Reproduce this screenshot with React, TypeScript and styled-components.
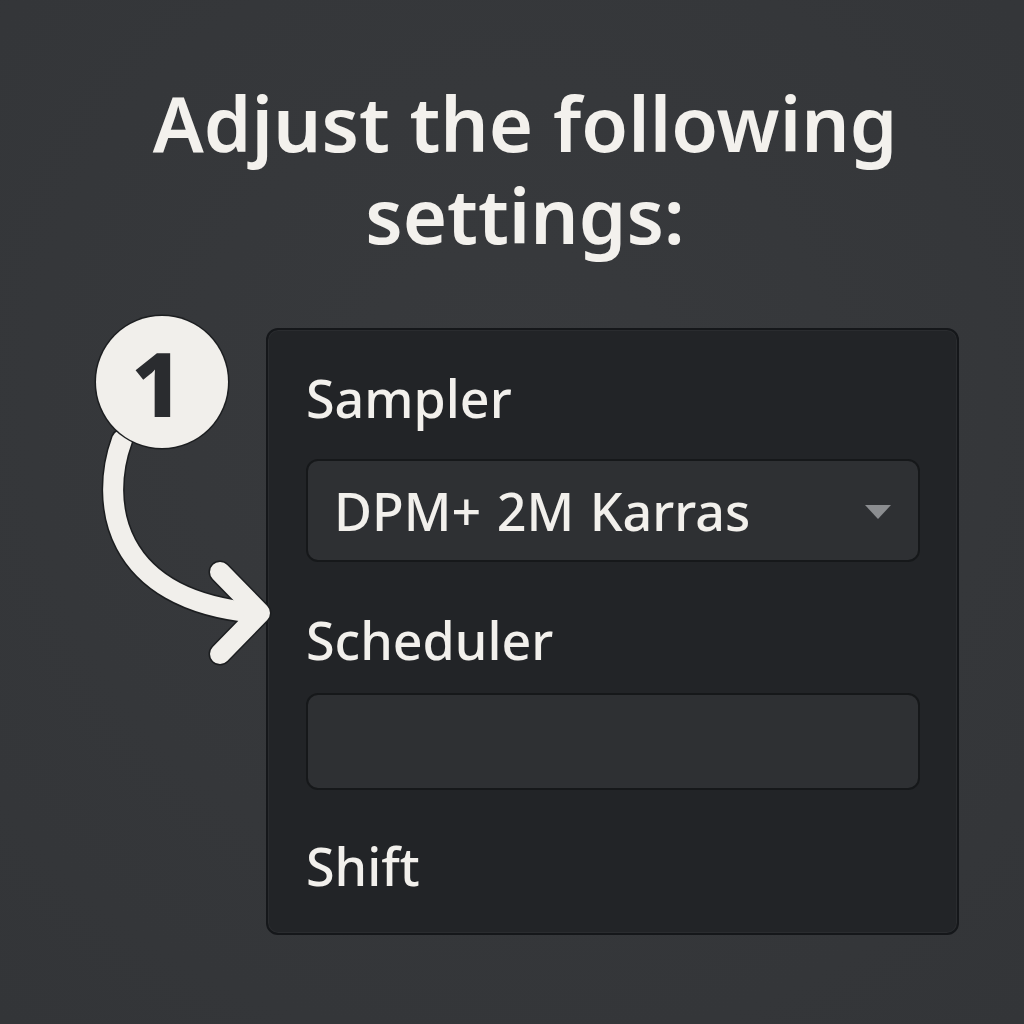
import React from "react";
import styled, { createGlobalStyle } from "styled-components";

const GlobalStyle = createGlobalStyle`
  html, body {
    margin: 0;
    padding: 0;
    background: #36383b;
  }
  body {
    font-family: "Noto Sans", "Open Sans", sans-serif;
    color: #f2f0ec;
  }
`;

const Page = styled.div`
  width: 1024px;
  height: 1024px;
  display: flex;
  flex-direction: column;
  align-items: stretch;
  background: radial-gradient(circle at 50% 40%, #383a3d 0%, #35373a 60%, #333538 100%);
  overflow: hidden;
`;

const Title = styled.h1`
  margin: 77px 0 0;
  padding-left: 26px;
  text-align: center;
  font-size: 76px;
  line-height: 92px;
  font-weight: 600;
  letter-spacing: 0;
  color: #f3f1ed;
`;

const Stage = styled.div`
  position: relative;
  margin-top: 67px;
  display: flex;
  align-items: flex-start;
  padding-left: 96px;
  gap: 38px;
`;

const Badge = styled.div`
  width: 132px;
  height: 132px;
  margin-top: -12px;
  border-radius: 50%;
  background: #f1efeb;
  box-shadow: 0 0 0 1.5px #1c1e20;
  display: flex;
  align-items: center;
  justify-content: center;
  color: #2a2c2f;
  font-size: 90px;
  font-weight: 800;
  line-height: 1;
  position: relative;
  z-index: 2;
  padding-right: 10px;
  box-sizing: border-box;
`;

const Panel = styled.div`
  width: 693px;
  height: 607px;
  box-sizing: border-box;
  border: 2px solid #15171a;
  border-radius: 12px;
  background: #222427;
  box-shadow: inset 0 0 0 1px #2a2c2f;
  padding: 37px 38px 0 38px;
  display: flex;
  flex-direction: column;
`;

const Label = styled.div<{ $mt?: number; $mb?: number }>`
  font-size: 52px;
  line-height: 62px;
  font-weight: 500;
  color: #f2f0ec;
  margin-top: ${(p) => p.$mt ?? 0}px;
  margin-bottom: ${(p) => p.$mb ?? 0}px;
`;

const Field = styled.div<{ $h: number }>`
  height: ${(p) => p.$h}px;
  box-sizing: border-box;
  width: 614px;
  border: 2px solid #16181a;
  border-radius: 12px;
  background: #2e3033;
  display: flex;
  align-items: center;
  justify-content: space-between;
  padding: 0 26px 0 26px;
`;

const FieldText = styled.span`
  font-size: 52px;
  line-height: 62px;
  font-weight: 500;
  color: #f2f0ec;
  word-spacing: 2px;
`;

const Caret = styled.svg`
  width: 28px;
  height: 16px;
  margin-top: 2px;
`;

const Overlay = styled.svg`
  position: absolute;
  left: 0;
  top: 0;
  width: 1024px;
  height: 700px;
  pointer-events: none;
  z-index: 1;
  overflow: visible;
`;

const ARC = "M122 440 C100 500, 110 600, 256 613";
const HEAD = "M220 572 L260 613 L220 654";

export default function App() {
  return (
    <>
      <GlobalStyle />
      <Page>
        <Title>
          Adjust the following
          <br />
          settings:
        </Title>
        <Stage>
          <Badge>1</Badge>
          <Panel>
            <Label $mb={30}>Sampler</Label>
            <Field $h={103}>
              <FieldText>DPM+ 2M Karras</FieldText>
              <Caret viewBox="0 0 28 16">
                <path d="M1 1 L27 1 L14 15 Z" fill="#8b8d90" />
              </Caret>
            </Field>
            <Label $mt={47} $mb={22}>Scheduler</Label>
            <Field $h={97} />
            <Label $mt={45}>Shift</Label>
          </Panel>
          <Overlay viewBox="0 328 1024 700">
            <g fill="none" strokeLinecap="round" strokeLinejoin="round">
              <path d={ARC} stroke="#1c1e20" strokeWidth="23" />
              <path d={HEAD} stroke="#1c1e20" strokeWidth="23" />
              <path d={ARC} stroke="#f1efeb" strokeWidth="20" />
              <path d={HEAD} stroke="#f1efeb" strokeWidth="20" />
            </g>
          </Overlay>
        </Stage>
      </Page>
    </>
  );
}
